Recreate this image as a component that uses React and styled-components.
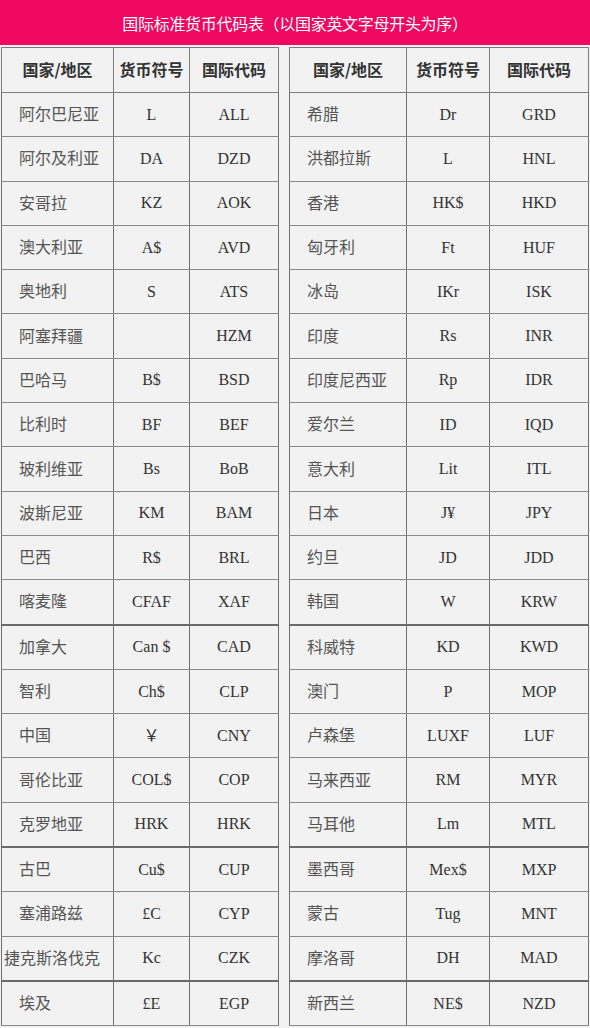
import React from "react";
import styled, { createGlobalStyle } from "styled-components";

const GlobalStyle = createGlobalStyle`
  html, body {
    margin: 0;
    padding: 0;
    background: #f2f2f2;
  }
`;

const Page = styled.div`
  width: 590px;
  background: #f2f2f2;
`;

const TitleBar = styled.div`
  height: 45px;
  margin-bottom: 2px;
  background: #f0075f;
  color: #ffffff;
  display: flex;
  align-items: center;
  justify-content: center;
  font-family: "Noto Sans CJK SC", sans-serif;
  font-size: 16px;
  font-weight: 400;
  letter-spacing: -0.3px;
`;

const Tables = styled.div`
  display: flex;
  gap: 10px;
  padding-left: 1px;
`;

const Table = styled.table`
  border-collapse: collapse;
  table-layout: fixed;
  width: ${(props) => props.$width}px;
  background: #f2f2f2;
`;

const HeadCell = styled.th`
  height: 42px;
  padding: 0 0 2px;
  border: 1px solid #7c7c7c;
  font-family: "Noto Sans CJK SC", sans-serif;
  font-size: 16px;
  font-weight: 700;
  line-height: 1;
  color: #333333;
  text-align: center;
`;

const Row = styled.tr`
  td {
    border-top: ${(props) => (props.$thick ? "2px solid #6a6a6a" : "1px solid #8a8a8a")};
  }
`;

const NameCell = styled.td`
  height: 40.3px;
  padding: 0 0 3px ${(props) => (props.$tight ? 2 : 17)}px;
  border: 1px solid #8a8a8a;
  border-left-color: #707070;
  border-right-color: #707070;
  font-family: "Noto Sans CJK SC", serif;
  font-size: 16px;
  font-weight: 400;
  line-height: 1;
  color: #555555;
  text-align: left;
  white-space: nowrap;
`;

const CodeCell = styled.td`
  height: 43.3px;
  padding: 0;
  border: 1px solid #8a8a8a;
  border-left-color: #707070;
  border-right-color: #707070;
  font-family: "Liberation Serif", "Noto Sans CJK SC", serif;
  font-size: 16px;
  line-height: 1;
  color: #333333;
  text-align: center;
  white-space: nowrap;
`;

const THICK = [12, 17, 20];

const left = [
  ["阿尔巴尼亚", "L", "ALL"],
  ["阿尔及利亚", "DA", "DZD"],
  ["安哥拉", "KZ", "AOK"],
  ["澳大利亚", "A$", "AVD"],
  ["奥地利", "S", "ATS"],
  ["阿塞拜疆", "", "HZM"],
  ["巴哈马", "B$", "BSD"],
  ["比利时", "BF", "BEF"],
  ["玻利维亚", "Bs", "BoB"],
  ["波斯尼亚", "KM", "BAM"],
  ["巴西", "R$", "BRL"],
  ["喀麦隆", "CFAF", "XAF"],
  ["加拿大", "Can $", "CAD"],
  ["智利", "Ch$", "CLP"],
  ["中国", "￥", "CNY"],
  ["哥伦比亚", "COL$", "COP"],
  ["克罗地亚", "HRK", "HRK"],
  ["古巴", "Cu$", "CUP"],
  ["塞浦路兹", "£C", "CYP"],
  ["捷克斯洛伐克", "Kc", "CZK"],
  ["埃及", "£E", "EGP"],
];

const right = [
  ["希腊", "Dr", "GRD"],
  ["洪都拉斯", "L", "HNL"],
  ["香港", "HK$", "HKD"],
  ["匈牙利", "Ft", "HUF"],
  ["冰岛", "IKr", "ISK"],
  ["印度", "Rs", "INR"],
  ["印度尼西亚", "Rp", "IDR"],
  ["爱尔兰", "ID", "IQD"],
  ["意大利", "Lit", "ITL"],
  ["日本", "J¥", "JPY"],
  ["约旦", "JD", "JDD"],
  ["韩国", "W", "KRW"],
  ["科威特", "KD", "KWD"],
  ["澳门", "P", "MOP"],
  ["卢森堡", "LUXF", "LUF"],
  ["马来西亚", "RM", "MYR"],
  ["马耳他", "Lm", "MTL"],
  ["墨西哥", "Mex$", "MXP"],
  ["蒙古", "Tug", "MNT"],
  ["摩洛哥", "DH", "MAD"],
  ["新西兰", "NE$", "NZD"],
];

function CurrencyTable({ rows, widths }) {
  const total = widths.reduce((a, b) => a + b, 0);
  return (
    <Table $width={total}>
      <colgroup>
        {widths.map((w, i) => (
          <col key={i} style={{ width: w }} />
        ))}
      </colgroup>
      <thead>
        <tr>
          <HeadCell>国家/地区</HeadCell>
          <HeadCell>货币符号</HeadCell>
          <HeadCell>国际代码</HeadCell>
        </tr>
      </thead>
      <tbody>
        {rows.map(([name, sym, code], i) => (
          <Row key={code + i} $thick={THICK.includes(i)}>
            <NameCell $tight={name.length > 5}>{name}</NameCell>
            <CodeCell>{sym}</CodeCell>
            <CodeCell>{code}</CodeCell>
          </Row>
        ))}
      </tbody>
    </Table>
  );
}

export default function App() {
  return (
    <>
      <GlobalStyle />
      <Page>
        <TitleBar>国际标准货币代码表（以国家英文字母开头为序）</TitleBar>
        <Tables>
          <CurrencyTable rows={left} widths={[112, 76, 89]} />
          <CurrencyTable rows={right} widths={[117, 83, 99]} />
        </Tables>
      </Page>
    </>
  );
}
